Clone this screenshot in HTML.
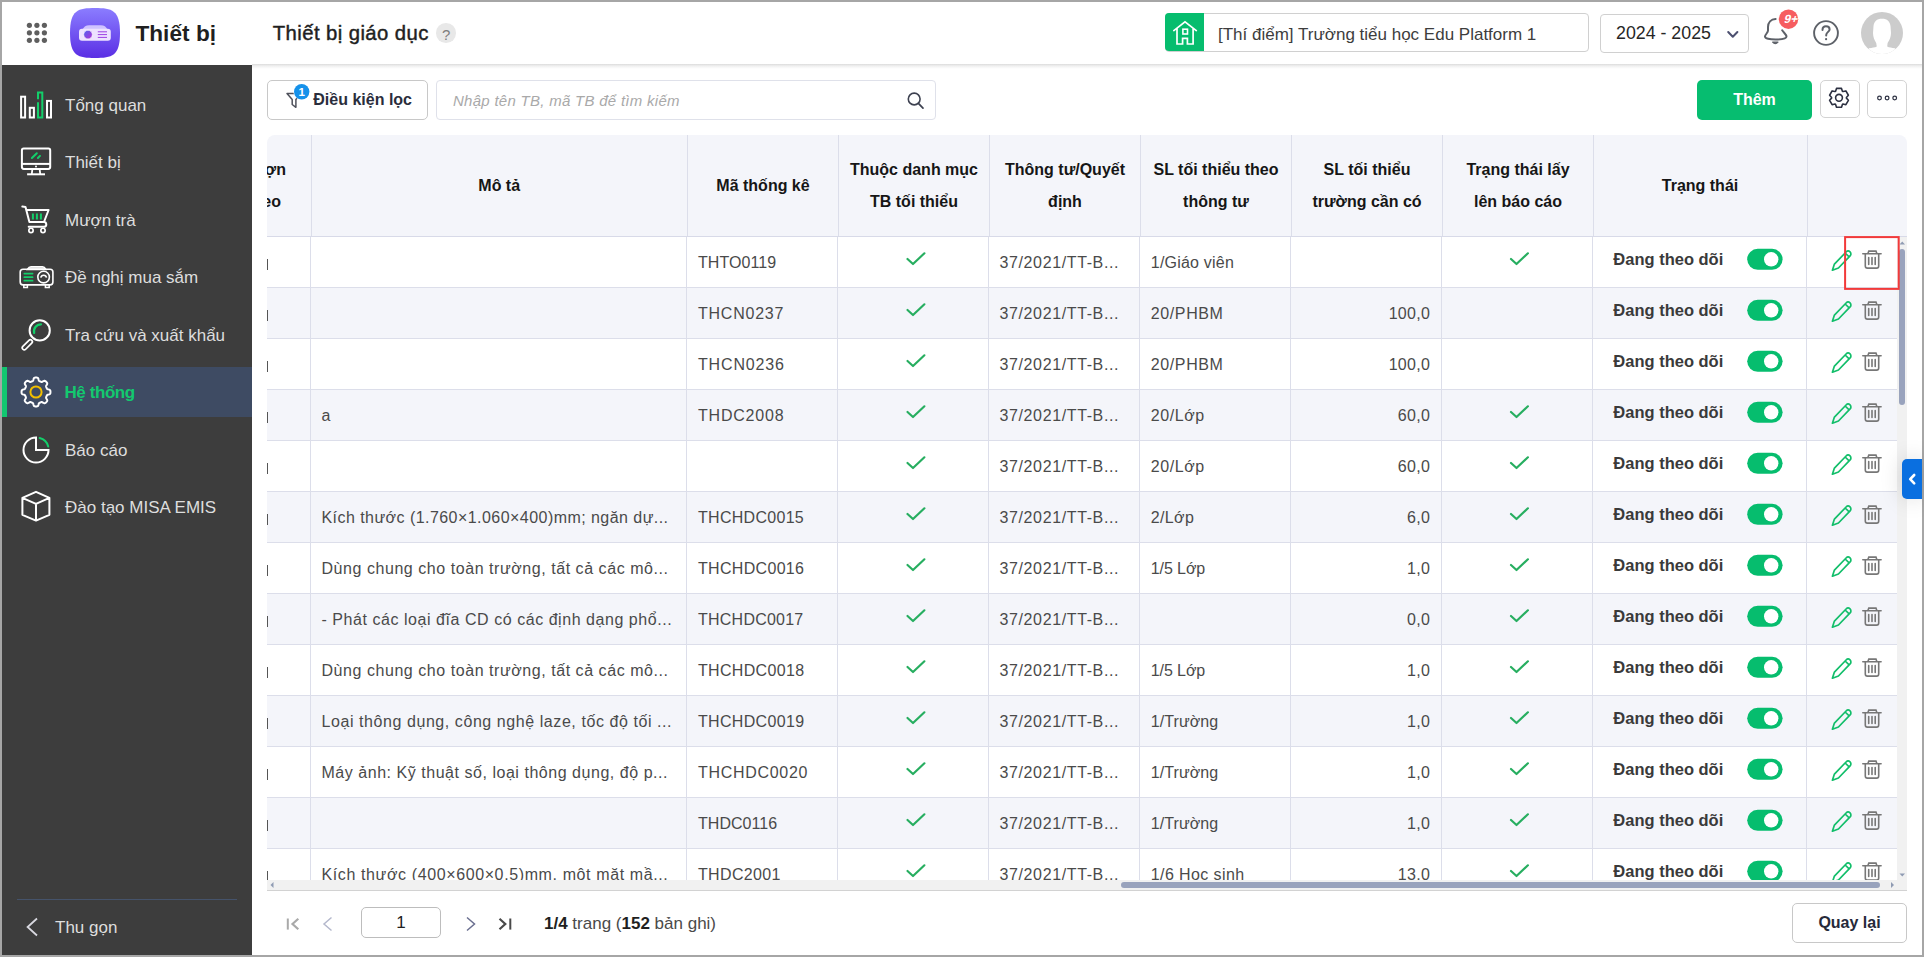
<!DOCTYPE html>
<html><head><meta charset="utf-8"><style>
html,body{margin:0;padding:0;}
body{width:1924px;height:957px;overflow:hidden;background:#a6a6a6;position:relative;font-family:"Liberation Sans", sans-serif;}
.t{position:absolute;white-space:nowrap;}
.r{position:absolute;box-sizing:content-box;}
svg.ov{position:absolute;left:0;top:0;width:1924px;height:957px;}
</style></head><body>
<div class="r" style="left:2px;top:2px;width:1920px;height:953px;background:#fff;"></div><div class="r" style="left:2px;top:65px;width:250px;height:890px;background:#3d3d3d;"></div><div class="r" style="left:2px;top:367px;width:250px;height:50px;background:#3e4b63;"></div><div class="r" style="left:2px;top:367px;width:5px;height:50px;background:#12c670;"></div><div class="t" style="left:65px;top:97.23px;font-size:17px;line-height:17px;color:#dedede;">Tổng quan</div><div class="t" style="left:65px;top:154.23px;font-size:17px;line-height:17px;color:#dedede;">Thiết bị</div><div class="t" style="left:65px;top:212.23px;font-size:17px;line-height:17px;color:#dedede;">Mượn trà</div><div class="t" style="left:65px;top:269.23px;font-size:17px;line-height:17px;color:#dedede;">Đề nghị mua sắm</div><div class="t" style="left:65px;top:327.23px;font-size:17px;line-height:17px;color:#dedede;">Tra cứu và xuất khẩu</div><div class="t" style="left:64.4px;top:384.23px;font-size:17px;line-height:17px;color:#13c96f;font-weight:bold;letter-spacing:-0.4px;">Hệ thống</div><div class="t" style="left:65px;top:442.23px;font-size:17px;line-height:17px;color:#dedede;">Báo cáo</div><div class="t" style="left:65px;top:499.23px;font-size:17px;line-height:17px;color:#dedede;">Đào tạo MISA EMIS</div><div class="r" style="left:17px;top:899px;width:220px;height:1px;background:#45536b;"></div><div class="t" style="left:55px;top:918.83px;font-size:17px;line-height:17px;color:#dedede;">Thu gọn</div><div class="t" style="left:135.4px;top:22.59px;font-size:22.6px;line-height:22.6px;color:#1f1f1f;font-weight:bold;letter-spacing:0.05px;">Thiết bị</div><div class="t" style="left:272.8px;top:23.16px;font-size:20.3px;line-height:20.3px;color:#1f1f1f;letter-spacing:0.42px;-webkit-text-stroke:0.45px #1f1f1f;">Thiết bị giáo dục</div><div class="r" style="left:436.3px;top:23.1px;width:19.6px;height:19.6px;background:#e8e8e8;border-radius:50%;"></div><div class="t" style="left:436.2px;width:20px;text-align:center;top:27.15px;font-size:15px;line-height:15px;color:#7d7d7d;">?</div><div class="r" style="left:252px;top:64px;width:1670px;height:5px;background:linear-gradient(rgba(0,0,0,0.14),rgba(0,0,0,0.06) 40%,rgba(0,0,0,0));"></div><div class="r" style="left:1165px;top:13px;width:422px;height:37.2px;border:1px solid #d0d0d0;border-radius:4px;background:#fff;"></div><div class="r" style="left:1165px;top:13px;width:39px;height:38.2px;background:#06bd6e;border-radius:4px 0 0 4px;"></div><div class="t" style="left:1218px;top:25.83px;font-size:17px;line-height:17px;color:#3d3d3d;">[Thí điểm] Trường tiểu học Edu Platform 1</div><div class="r" style="left:1599.5px;top:13.5px;width:147px;height:37px;border:1px solid #d0d0d0;border-radius:4px;background:#fff;"></div><div class="t" style="left:1616px;top:25.18px;font-size:17.8px;line-height:17.8px;color:#262626;">2024 - 2025</div><div class="r" style="left:267px;top:80px;width:159px;height:38px;border:1px solid #c8c8c8;border-radius:5px;background:#fff;"></div><div class="t" style="left:313.3px;top:91.64px;font-size:16px;line-height:16px;color:#2a2d3c;font-weight:bold;">Điều kiện lọc</div><div class="r" style="left:436px;top:80px;width:498px;height:38px;border:1px solid #dfe1ea;border-radius:4px;background:#fff;"></div><div class="t" style="left:453px;top:92.95px;font-size:15px;line-height:15px;color:#a9a9a9;letter-spacing:0.28px;font-style:italic;">Nhập tên TB, mã TB để tìm kiếm</div><div class="r" style="left:1697px;top:80px;width:115px;height:40px;background:#06bd70;border-radius:5px;"></div><div class="t" style="left:1697.0px;width:115px;text-align:center;top:91.54px;font-size:16px;line-height:16px;color:#fff;font-weight:bold;">Thêm</div><div class="r" style="left:1820.2px;top:80.2px;width:37.4px;height:35.4px;border:1px solid #d3d3d3;border-radius:5px;background:#fff;"></div><div class="r" style="left:1867.2px;top:80.2px;width:37.8px;height:35.4px;border:1px solid #d3d3d3;border-radius:5px;background:#fff;"></div><div class="r" style="left:267px;top:135px;width:1640px;height:101px;background:#f4f5fa;border-radius:8px 8px 0 0;"></div><div class="r" style="left:267px;top:236px;width:1640px;height:1px;background:#d8dae8;"></div><div class="r" style="left:311px;top:135px;width:1px;height:101px;background:#dcdeea;"></div><div class="r" style="left:687px;top:135px;width:1px;height:101px;background:#dcdeea;"></div><div class="r" style="left:838px;top:135px;width:1px;height:101px;background:#dcdeea;"></div><div class="r" style="left:989px;top:135px;width:1px;height:101px;background:#dcdeea;"></div><div class="r" style="left:1140px;top:135px;width:1px;height:101px;background:#dcdeea;"></div><div class="r" style="left:1291px;top:135px;width:1px;height:101px;background:#dcdeea;"></div><div class="r" style="left:1442px;top:135px;width:1px;height:101px;background:#dcdeea;"></div><div class="r" style="left:1593px;top:135px;width:1px;height:101px;background:#dcdeea;"></div><div class="r" style="left:1807px;top:135px;width:1px;height:101px;background:#dcdeea;"></div><div class="t" style="left:399.2px;width:200px;text-align:center;top:178.04px;font-size:16px;line-height:16px;color:#161616;font-weight:bold;">Mô tả</div><div class="t" style="left:663.0px;width:200px;text-align:center;top:178.04px;font-size:16px;line-height:16px;color:#161616;font-weight:bold;">Mã thống kê</div><div class="t" style="left:814.0px;width:200px;text-align:center;top:161.94px;font-size:16px;line-height:16px;color:#161616;font-weight:bold;">Thuộc danh mục</div><div class="t" style="left:814.0px;width:200px;text-align:center;top:193.74px;font-size:16px;line-height:16px;color:#161616;font-weight:bold;">TB tối thiểu</div><div class="t" style="left:965.0px;width:200px;text-align:center;top:161.94px;font-size:16px;line-height:16px;color:#161616;font-weight:bold;">Thông tư/Quyết</div><div class="t" style="left:965.0px;width:200px;text-align:center;top:193.74px;font-size:16px;line-height:16px;color:#161616;font-weight:bold;">định</div><div class="t" style="left:1116.0px;width:200px;text-align:center;top:161.94px;font-size:16px;line-height:16px;color:#161616;font-weight:bold;">SL tối thiểu theo</div><div class="t" style="left:1116.0px;width:200px;text-align:center;top:193.74px;font-size:16px;line-height:16px;color:#161616;font-weight:bold;">thông tư</div><div class="t" style="left:1267.0px;width:200px;text-align:center;top:161.94px;font-size:16px;line-height:16px;color:#161616;font-weight:bold;">SL tối thiểu</div><div class="t" style="left:1267.0px;width:200px;text-align:center;top:193.74px;font-size:16px;line-height:16px;color:#161616;font-weight:bold;">trường cần có</div><div class="t" style="left:1418.0px;width:200px;text-align:center;top:161.94px;font-size:16px;line-height:16px;color:#161616;font-weight:bold;">Trạng thái lấy</div><div class="t" style="left:1418.0px;width:200px;text-align:center;top:193.74px;font-size:16px;line-height:16px;color:#161616;font-weight:bold;">lên báo cáo</div><div class="t" style="left:1600.0px;width:200px;text-align:center;top:178.04px;font-size:16px;line-height:16px;color:#161616;font-weight:bold;">Trạng thái</div><div class="r" style="left:267px;top:135px;width:43px;height:100px;overflow:hidden;"><div class="t" style="right:24px;top:26.94px;font-size:16px;line-height:16px;color:#161616;font-weight:bold;">mượn</div><div class="t" style="right:29px;top:58.74px;font-size:16px;line-height:16px;color:#161616;font-weight:bold;">theo</div></div><div class="r" style="left:267px;top:237px;width:1630px;height:643px;overflow:hidden;"><div class="r" style="left:0px;top:50px;width:1640px;height:1px;background:#dcdeea;"></div><div class="r" style="left:0px;top:22px;width:1.1px;height:11px;background:#555;"></div><div class="t" style="left:431px;top:18.34px;font-size:16px;line-height:16px;color:#4a4a4a;letter-spacing:0.054px;">THTO0119</div><div class="t" style="left:732.5px;top:18.34px;font-size:16px;line-height:16px;color:#4a4a4a;letter-spacing:0.62px;">37/2021/TT-B...</div><div class="t" style="left:883.8px;top:18.34px;font-size:16px;line-height:16px;color:#4a4a4a;letter-spacing:0.206px;">1/Giáo viên</div><div class="t" style="left:1346.3px;top:13.94px;font-size:16.5px;line-height:16.5px;color:#3a3a3a;font-weight:bold;">Đang theo dõi</div><div class="r" style="left:0px;top:51px;width:1640px;height:50px;background:#f4f5fa;"></div><div class="r" style="left:0px;top:101px;width:1640px;height:1px;background:#dcdeea;"></div><div class="r" style="left:0px;top:73px;width:1.1px;height:11px;background:#555;"></div><div class="t" style="left:431px;top:69.34px;font-size:16px;line-height:16px;color:#4a4a4a;letter-spacing:0.759px;">THCN0237</div><div class="t" style="left:732.5px;top:69.34px;font-size:16px;line-height:16px;color:#4a4a4a;letter-spacing:0.62px;">37/2021/TT-B...</div><div class="t" style="left:883.8px;top:69.34px;font-size:16px;line-height:16px;color:#4a4a4a;letter-spacing:0.604px;">20/PHBM</div><div class="t" style="left:1023.2px;width:140px;text-align:right;top:69.34px;font-size:16px;line-height:16px;color:#4a4a4a;letter-spacing:0.3px;">100,0</div><div class="t" style="left:1346.3px;top:64.94px;font-size:16.5px;line-height:16.5px;color:#3a3a3a;font-weight:bold;">Đang theo dõi</div><div class="r" style="left:0px;top:152px;width:1640px;height:1px;background:#dcdeea;"></div><div class="r" style="left:0px;top:124px;width:1.1px;height:11px;background:#555;"></div><div class="t" style="left:431px;top:120.34px;font-size:16px;line-height:16px;color:#4a4a4a;letter-spacing:0.846px;">THCN0236</div><div class="t" style="left:732.5px;top:120.34px;font-size:16px;line-height:16px;color:#4a4a4a;letter-spacing:0.62px;">37/2021/TT-B...</div><div class="t" style="left:883.8px;top:120.34px;font-size:16px;line-height:16px;color:#4a4a4a;letter-spacing:0.604px;">20/PHBM</div><div class="t" style="left:1023.2px;width:140px;text-align:right;top:120.34px;font-size:16px;line-height:16px;color:#4a4a4a;letter-spacing:0.3px;">100,0</div><div class="t" style="left:1346.3px;top:115.94px;font-size:16.5px;line-height:16.5px;color:#3a3a3a;font-weight:bold;">Đang theo dõi</div><div class="r" style="left:0px;top:153px;width:1640px;height:50px;background:#f4f5fa;"></div><div class="r" style="left:0px;top:203px;width:1640px;height:1px;background:#dcdeea;"></div><div class="r" style="left:0px;top:175px;width:1.1px;height:11px;background:#555;"></div><div class="t" style="left:54.5px;top:171.34px;font-size:16px;line-height:16px;color:#4a4a4a;letter-spacing:0.3px;">a</div><div class="t" style="left:431px;top:171.34px;font-size:16px;line-height:16px;color:#4a4a4a;letter-spacing:0.796px;">THDC2008</div><div class="t" style="left:732.5px;top:171.34px;font-size:16px;line-height:16px;color:#4a4a4a;letter-spacing:0.62px;">37/2021/TT-B...</div><div class="t" style="left:883.8px;top:171.34px;font-size:16px;line-height:16px;color:#4a4a4a;letter-spacing:0.561px;">20/Lớp</div><div class="t" style="left:1023.2px;width:140px;text-align:right;top:171.34px;font-size:16px;line-height:16px;color:#4a4a4a;letter-spacing:0.3px;">60,0</div><div class="t" style="left:1346.3px;top:166.94px;font-size:16.5px;line-height:16.5px;color:#3a3a3a;font-weight:bold;">Đang theo dõi</div><div class="r" style="left:0px;top:254px;width:1640px;height:1px;background:#dcdeea;"></div><div class="r" style="left:0px;top:226px;width:1.1px;height:11px;background:#555;"></div><div class="t" style="left:732.5px;top:222.34px;font-size:16px;line-height:16px;color:#4a4a4a;letter-spacing:0.62px;">37/2021/TT-B...</div><div class="t" style="left:883.8px;top:222.34px;font-size:16px;line-height:16px;color:#4a4a4a;letter-spacing:0.561px;">20/Lớp</div><div class="t" style="left:1023.2px;width:140px;text-align:right;top:222.34px;font-size:16px;line-height:16px;color:#4a4a4a;letter-spacing:0.3px;">60,0</div><div class="t" style="left:1346.3px;top:217.94px;font-size:16.5px;line-height:16.5px;color:#3a3a3a;font-weight:bold;">Đang theo dõi</div><div class="r" style="left:0px;top:255px;width:1640px;height:50px;background:#f4f5fa;"></div><div class="r" style="left:0px;top:305px;width:1640px;height:1px;background:#dcdeea;"></div><div class="r" style="left:0px;top:277px;width:1.1px;height:11px;background:#555;"></div><div class="t" style="left:54.5px;top:273.34px;font-size:16px;line-height:16px;color:#4a4a4a;letter-spacing:0.45px;">Kích thước (1.760×1.060×400)mm; ngăn dự...</div><div class="t" style="left:431px;top:273.34px;font-size:16px;line-height:16px;color:#4a4a4a;letter-spacing:0.286px;">THCHDC0015</div><div class="t" style="left:732.5px;top:273.34px;font-size:16px;line-height:16px;color:#4a4a4a;letter-spacing:0.62px;">37/2021/TT-B...</div><div class="t" style="left:883.8px;top:273.34px;font-size:16px;line-height:16px;color:#4a4a4a;letter-spacing:0.352px;">2/Lớp</div><div class="t" style="left:1023.2px;width:140px;text-align:right;top:273.34px;font-size:16px;line-height:16px;color:#4a4a4a;letter-spacing:0.3px;">6,0</div><div class="t" style="left:1346.3px;top:268.93px;font-size:16.5px;line-height:16.5px;color:#3a3a3a;font-weight:bold;">Đang theo dõi</div><div class="r" style="left:0px;top:356px;width:1640px;height:1px;background:#dcdeea;"></div><div class="r" style="left:0px;top:328px;width:1.1px;height:11px;background:#555;"></div><div class="t" style="left:54.5px;top:324.34px;font-size:16px;line-height:16px;color:#4a4a4a;letter-spacing:0.552px;">Dùng chung cho toàn trường, tất cả các mô...</div><div class="t" style="left:431px;top:324.34px;font-size:16px;line-height:16px;color:#4a4a4a;letter-spacing:0.316px;">THCHDC0016</div><div class="t" style="left:732.5px;top:324.34px;font-size:16px;line-height:16px;color:#4a4a4a;letter-spacing:0.62px;">37/2021/TT-B...</div><div class="t" style="left:883.8px;top:324.34px;font-size:16px;line-height:16px;color:#4a4a4a;letter-spacing:-0.098px;">1/5 Lớp</div><div class="t" style="left:1023.2px;width:140px;text-align:right;top:324.34px;font-size:16px;line-height:16px;color:#4a4a4a;letter-spacing:0.3px;">1,0</div><div class="t" style="left:1346.3px;top:319.93px;font-size:16.5px;line-height:16.5px;color:#3a3a3a;font-weight:bold;">Đang theo dõi</div><div class="r" style="left:0px;top:357px;width:1640px;height:50px;background:#f4f5fa;"></div><div class="r" style="left:0px;top:407px;width:1640px;height:1px;background:#dcdeea;"></div><div class="r" style="left:0px;top:379px;width:1.1px;height:11px;background:#555;"></div><div class="t" style="left:54.5px;top:375.34px;font-size:16px;line-height:16px;color:#4a4a4a;letter-spacing:0.547px;">- Phát các loại đĩa CD có các định dạng phổ...</div><div class="t" style="left:431px;top:375.34px;font-size:16px;line-height:16px;color:#4a4a4a;letter-spacing:0.236px;">THCHDC0017</div><div class="t" style="left:732.5px;top:375.34px;font-size:16px;line-height:16px;color:#4a4a4a;letter-spacing:0.62px;">37/2021/TT-B...</div><div class="t" style="left:1023.2px;width:140px;text-align:right;top:375.34px;font-size:16px;line-height:16px;color:#4a4a4a;letter-spacing:0.3px;">0,0</div><div class="t" style="left:1346.3px;top:370.93px;font-size:16.5px;line-height:16.5px;color:#3a3a3a;font-weight:bold;">Đang theo dõi</div><div class="r" style="left:0px;top:458px;width:1640px;height:1px;background:#dcdeea;"></div><div class="r" style="left:0px;top:430px;width:1.1px;height:11px;background:#555;"></div><div class="t" style="left:54.5px;top:426.34px;font-size:16px;line-height:16px;color:#4a4a4a;letter-spacing:0.552px;">Dùng chung cho toàn trường, tất cả các mô...</div><div class="t" style="left:431px;top:426.34px;font-size:16px;line-height:16px;color:#4a4a4a;letter-spacing:0.326px;">THCHDC0018</div><div class="t" style="left:732.5px;top:426.34px;font-size:16px;line-height:16px;color:#4a4a4a;letter-spacing:0.62px;">37/2021/TT-B...</div><div class="t" style="left:883.8px;top:426.34px;font-size:16px;line-height:16px;color:#4a4a4a;letter-spacing:-0.098px;">1/5 Lớp</div><div class="t" style="left:1023.2px;width:140px;text-align:right;top:426.34px;font-size:16px;line-height:16px;color:#4a4a4a;letter-spacing:0.3px;">1,0</div><div class="t" style="left:1346.3px;top:421.93px;font-size:16.5px;line-height:16.5px;color:#3a3a3a;font-weight:bold;">Đang theo dõi</div><div class="r" style="left:0px;top:459px;width:1640px;height:50px;background:#f4f5fa;"></div><div class="r" style="left:0px;top:509px;width:1640px;height:1px;background:#dcdeea;"></div><div class="r" style="left:0px;top:481px;width:1.1px;height:11px;background:#555;"></div><div class="t" style="left:54.5px;top:477.34px;font-size:16px;line-height:16px;color:#4a4a4a;letter-spacing:0.57px;">Loại thông dụng, công nghệ laze, tốc độ tối ...</div><div class="t" style="left:431px;top:477.34px;font-size:16px;line-height:16px;color:#4a4a4a;letter-spacing:0.326px;">THCHDC0019</div><div class="t" style="left:732.5px;top:477.34px;font-size:16px;line-height:16px;color:#4a4a4a;letter-spacing:0.62px;">37/2021/TT-B...</div><div class="t" style="left:883.8px;top:477.34px;font-size:16px;line-height:16px;color:#4a4a4a;letter-spacing:0.08px;">1/Trường</div><div class="t" style="left:1023.2px;width:140px;text-align:right;top:477.34px;font-size:16px;line-height:16px;color:#4a4a4a;letter-spacing:0.3px;">1,0</div><div class="t" style="left:1346.3px;top:472.93px;font-size:16.5px;line-height:16.5px;color:#3a3a3a;font-weight:bold;">Đang theo dõi</div><div class="r" style="left:0px;top:560px;width:1640px;height:1px;background:#dcdeea;"></div><div class="r" style="left:0px;top:532px;width:1.1px;height:11px;background:#555;"></div><div class="t" style="left:54.5px;top:528.34px;font-size:16px;line-height:16px;color:#4a4a4a;letter-spacing:0.533px;">Máy ảnh: Kỹ thuật số, loại thông dụng, độ p...</div><div class="t" style="left:431px;top:528.34px;font-size:16px;line-height:16px;color:#4a4a4a;letter-spacing:0.696px;">THCHDC0020</div><div class="t" style="left:732.5px;top:528.34px;font-size:16px;line-height:16px;color:#4a4a4a;letter-spacing:0.62px;">37/2021/TT-B...</div><div class="t" style="left:883.8px;top:528.34px;font-size:16px;line-height:16px;color:#4a4a4a;letter-spacing:0.08px;">1/Trường</div><div class="t" style="left:1023.2px;width:140px;text-align:right;top:528.34px;font-size:16px;line-height:16px;color:#4a4a4a;letter-spacing:0.3px;">1,0</div><div class="t" style="left:1346.3px;top:523.93px;font-size:16.5px;line-height:16.5px;color:#3a3a3a;font-weight:bold;">Đang theo dõi</div><div class="r" style="left:0px;top:561px;width:1640px;height:50px;background:#f4f5fa;"></div><div class="r" style="left:0px;top:611px;width:1640px;height:1px;background:#dcdeea;"></div><div class="r" style="left:0px;top:583px;width:1.1px;height:11px;background:#555;"></div><div class="t" style="left:431px;top:579.34px;font-size:16px;line-height:16px;color:#4a4a4a;letter-spacing:0.045px;">THDC0116</div><div class="t" style="left:732.5px;top:579.34px;font-size:16px;line-height:16px;color:#4a4a4a;letter-spacing:0.62px;">37/2021/TT-B...</div><div class="t" style="left:883.8px;top:579.34px;font-size:16px;line-height:16px;color:#4a4a4a;letter-spacing:0.08px;">1/Trường</div><div class="t" style="left:1023.2px;width:140px;text-align:right;top:579.34px;font-size:16px;line-height:16px;color:#4a4a4a;letter-spacing:0.3px;">1,0</div><div class="t" style="left:1346.3px;top:574.93px;font-size:16.5px;line-height:16.5px;color:#3a3a3a;font-weight:bold;">Đang theo dõi</div><div class="r" style="left:0px;top:662px;width:1640px;height:1px;background:#dcdeea;"></div><div class="r" style="left:0px;top:634px;width:1.1px;height:11px;background:#555;"></div><div class="t" style="left:54.5px;top:630.34px;font-size:16px;line-height:16px;color:#4a4a4a;letter-spacing:0.613px;">Kích thước (400×600×0.5)mm, một mặt mầ...</div><div class="t" style="left:431px;top:630.34px;font-size:16px;line-height:16px;color:#4a4a4a;letter-spacing:0.346px;">THDC2001</div><div class="t" style="left:732.5px;top:630.34px;font-size:16px;line-height:16px;color:#4a4a4a;letter-spacing:0.62px;">37/2021/TT-B...</div><div class="t" style="left:883.8px;top:630.34px;font-size:16px;line-height:16px;color:#4a4a4a;letter-spacing:0.405px;">1/6 Học sinh</div><div class="t" style="left:1023.2px;width:140px;text-align:right;top:630.34px;font-size:16px;line-height:16px;color:#4a4a4a;letter-spacing:0.3px;">13,0</div><div class="t" style="left:1346.3px;top:625.93px;font-size:16.5px;line-height:16.5px;color:#3a3a3a;font-weight:bold;">Đang theo dõi</div><div class="r" style="left:43px;top:0px;width:1px;height:643px;background:#dcdeea;"></div><div class="r" style="left:419px;top:0px;width:1px;height:643px;background:#dcdeea;"></div><div class="r" style="left:570px;top:0px;width:1px;height:643px;background:#dcdeea;"></div><div class="r" style="left:721px;top:0px;width:1px;height:643px;background:#dcdeea;"></div><div class="r" style="left:872px;top:0px;width:1px;height:643px;background:#dcdeea;"></div><div class="r" style="left:1023px;top:0px;width:1px;height:643px;background:#dcdeea;"></div><div class="r" style="left:1174px;top:0px;width:1px;height:643px;background:#dcdeea;"></div><div class="r" style="left:1325px;top:0px;width:1px;height:643px;background:#dcdeea;"></div><div class="r" style="left:1539px;top:0px;width:1px;height:643px;background:#dcdeea;"></div></div><div class="r" style="left:267px;top:880px;width:1630px;height:10px;background:#f1f1f1;"></div><div class="r" style="left:267px;top:890px;width:1640px;height:1px;background:#d2d2d2;"></div><div class="r" style="left:1120.5px;top:882px;width:759.5px;height:6px;background:#99a3bd;border-radius:3px;"></div><div class="r" style="left:1897px;top:237px;width:10px;height:653px;background:#f1f1f1;"></div><div class="r" style="left:1899px;top:249px;width:6px;height:156px;background:#99a3bd;border-radius:3px;"></div><div class="r" style="left:361.2px;top:907.2px;width:77.8px;height:28.4px;border:1px solid #bdbdbd;border-radius:5px;background:#fff;"></div><div class="t" style="left:381.0px;width:40px;text-align:center;top:914.23px;font-size:17px;line-height:17px;color:#222;">1</div><div class="t" style="left:544px;top:915.23px;font-size:17px;line-height:17px;color:#4a4a4a;"><b style="color:#1f1f1f">1/4</b> trang (<b style="color:#1f1f1f">152</b> bản ghi)</div><div class="r" style="left:1792px;top:903px;width:113px;height:38px;border:1px solid #c8c8c8;border-radius:5px;background:#fff;"></div><div class="t" style="left:1793.0px;width:113px;text-align:center;top:914.64px;font-size:16px;line-height:16px;color:#262a3a;font-weight:bold;">Quay lại</div><div class="r" style="left:1902px;top:459px;width:20px;height:40px;background:#0a6fe0;border-radius:5px 0 0 5px;box-shadow:0 0 22px rgba(0,0,0,0.15);"></div>
<svg class="ov" width="1924" height="957" viewBox="0 0 1924 957">
<circle cx="29.4" cy="25.3" r="2.6" fill="#5f5f5f"/><circle cx="36.9" cy="25.3" r="2.6" fill="#5f5f5f"/><circle cx="44.4" cy="25.3" r="2.6" fill="#5f5f5f"/><circle cx="29.4" cy="32.8" r="2.6" fill="#5f5f5f"/><circle cx="36.9" cy="32.8" r="2.6" fill="#5f5f5f"/><circle cx="44.4" cy="32.8" r="2.6" fill="#5f5f5f"/><circle cx="29.4" cy="40.3" r="2.6" fill="#5f5f5f"/><circle cx="36.9" cy="40.3" r="2.6" fill="#5f5f5f"/><circle cx="44.4" cy="40.3" r="2.6" fill="#5f5f5f"/><defs><linearGradient id="lg" x1="0" y1="0" x2="0" y2="1"><stop offset="0" stop-color="#8b7dff"/><stop offset="1" stop-color="#5a2ee4"/></linearGradient><linearGradient id="lens" x1="0" y1="0" x2="1" y2="1"><stop offset="0" stop-color="#4e63f0"/><stop offset="1" stop-color="#b12fd6"/></linearGradient></defs><path d="M95 8 C112 8 120 10 120 33 C120 56 112 58 95 58 C78 58 70 56 70 33 C70 10 78 8 95 8 Z" fill="url(#lg)"/><path d="M82.5 29.5 Q84.5 25.2 89 25.2 L101 25.2 Q105.5 25.2 107.5 29.5 Z" fill="#cfc3ff"/><rect x="79" y="28.8" width="31.8" height="12" rx="3" fill="#ede2ff"/><circle cx="88" cy="34.6" r="4.3" fill="url(#lens)" stroke="#fff" stroke-width="0.6"/><line x1="97.8" y1="31.8" x2="107" y2="31.8" stroke="#9d3fe3" stroke-width="1"/><line x1="97.8" y1="34.6" x2="107" y2="34.6" stroke="#9d3fe3" stroke-width="1"/><line x1="97.8" y1="37.4" x2="107" y2="37.4" stroke="#9d3fe3" stroke-width="1"/><rect x="21.1" y="96.7" width="4" height="20.8" fill="none" stroke="#ffffff" stroke-width="2"/><rect x="29.8" y="107.8" width="4.1" height="9.7" fill="none" stroke="#ffffff" stroke-width="2"/><path d="M38 99.3 L38 92.5 L42.3 92.5 L42.3 117.5 L38 117.5 L38 102.3" fill="none" stroke="#13cf6a" stroke-width="2"/><rect x="47" y="100.9" width="4" height="16.6" fill="none" stroke="#ffffff" stroke-width="2"/><rect x="21.9" y="148.6" width="28.3" height="20.3" rx="1.8" fill="none" stroke="#ffffff" stroke-width="2"/><line x1="21.9" y1="163.9" x2="50.2" y2="163.9" stroke="#ffffff" stroke-width="2"/><circle cx="36" cy="166.6" r="1" fill="#ffffff"/><path d="M32.3 169.5 L31.8 174 M39.7 169.5 L40.2 174" stroke="#ffffff" stroke-width="1.8"/><line x1="27.1" y1="174.3" x2="45" y2="174.3" stroke="#ffffff" stroke-width="2"/><path d="M31.9 158 L36.8 153.2 M37.9 158 L40 155.9" stroke="#13cf6a" stroke-width="2" stroke-linecap="round"/><path d="M22.3 206.6 L25.5 207 L29.4 222 L43.6 222 Q46.3 222 46.3 224.4 Q46.3 226.8 43.6 226.8 L28.7 226.8" fill="none" stroke="#ffffff" stroke-width="2" stroke-linejoin="round" stroke-linecap="round"/><path d="M26.3 210 L48.6 210 L44 222" fill="none" stroke="#ffffff" stroke-width="2" stroke-linejoin="round"/><circle cx="31" cy="230.4" r="2.15" fill="none" stroke="#ffffff" stroke-width="1.7"/><circle cx="43" cy="230.4" r="2.15" fill="none" stroke="#ffffff" stroke-width="1.7"/><path d="M32.9 213.6 L32.9 219.5 M36.9 213.6 L36.9 219.5 M40.9 213.6 L40.9 219.5" stroke="#13cf6a" stroke-width="2"/><path d="M27.4 269.4 Q29 266.8 31 266.8 L42.5 266.8 Q44.5 266.8 45.8 269.4 Z" fill="#c4c4c4" stroke="#ffffff" stroke-width="1.6"/><rect x="20.2" y="269.3" width="32.7" height="15.6" rx="2.8" fill="none" stroke="#ffffff" stroke-width="1.6"/><circle cx="43.6" cy="277.1" r="5.8" fill="none" stroke="#ffffff" stroke-width="1.6"/><path d="M40.8 277.6 A2.9 2.9 0 0 1 46.5 277.6" fill="none" stroke="#ffffff" stroke-width="1.6"/><path d="M24.3 273.6 L32.6 273.6 M24.3 277.2 L32.6 277.2 M24.3 280.7 L32.6 280.7" stroke="#13cf6a" stroke-width="1.7" stroke-linecap="round"/><path d="M23.8 284.8 L23.8 287.6 L27.4 287.6 L27.4 284.8 M45.4 284.8 L45.4 287.6 L49.2 287.6 L49.2 284.8" fill="none" stroke="#ffffff" stroke-width="1.5"/><circle cx="39.7" cy="330.4" r="10.1" fill="none" stroke="#ffffff" stroke-width="2"/><g transform="translate(27.3,344.8) rotate(-45)"><rect x="-6.3" y="-2" width="12.6" height="4" rx="2" fill="none" stroke="#ffffff" stroke-width="1.7"/></g><path d="M34.2 333 A7 7 0 0 1 41 324.3" fill="none" stroke="#13cf6a" stroke-width="2.2" stroke-linecap="round"/><path d="M50.45 392.00 L50.44 391.62 L50.41 391.24 L50.36 390.87 L50.25 390.50 L50.05 390.15 L49.67 389.84 L49.04 389.58 L48.27 389.39 L47.63 389.21 L47.23 388.99 L47.00 388.74 L46.84 388.48 L46.72 388.21 L46.60 387.93 L46.49 387.66 L46.37 387.38 L46.26 387.11 L46.16 386.82 L46.08 386.53 L46.07 386.19 L46.20 385.75 L46.52 385.17 L46.93 384.49 L47.20 383.87 L47.24 383.37 L47.14 382.98 L46.95 382.65 L46.73 382.34 L46.48 382.06 L46.22 381.78 L45.94 381.52 L45.66 381.27 L45.35 381.05 L45.02 380.86 L44.63 380.76 L44.13 380.80 L43.51 381.07 L42.83 381.48 L42.25 381.80 L41.81 381.93 L41.47 381.92 L41.18 381.84 L40.89 381.74 L40.62 381.63 L40.34 381.51 L40.07 381.40 L39.79 381.28 L39.52 381.16 L39.26 381.00 L39.01 380.77 L38.79 380.37 L38.61 379.73 L38.42 378.96 L38.16 378.33 L37.85 377.95 L37.50 377.75 L37.13 377.64 L36.76 377.59 L36.38 377.56 L36.00 377.55 L35.62 377.56 L35.24 377.59 L34.87 377.64 L34.50 377.75 L34.15 377.95 L33.84 378.33 L33.58 378.96 L33.39 379.73 L33.21 380.37 L32.99 380.77 L32.74 381.00 L32.48 381.16 L32.21 381.28 L31.93 381.40 L31.66 381.51 L31.38 381.63 L31.11 381.74 L30.82 381.84 L30.53 381.92 L30.19 381.93 L29.75 381.80 L29.17 381.48 L28.49 381.07 L27.87 380.80 L27.37 380.76 L26.98 380.86 L26.65 381.05 L26.34 381.27 L26.06 381.52 L25.78 381.78 L25.52 382.06 L25.27 382.34 L25.05 382.65 L24.86 382.98 L24.76 383.37 L24.80 383.87 L25.07 384.49 L25.48 385.17 L25.80 385.75 L25.93 386.19 L25.92 386.53 L25.84 386.82 L25.74 387.11 L25.63 387.38 L25.51 387.66 L25.40 387.93 L25.28 388.21 L25.16 388.48 L25.00 388.74 L24.77 388.99 L24.37 389.21 L23.73 389.39 L22.96 389.58 L22.33 389.84 L21.95 390.15 L21.75 390.50 L21.64 390.87 L21.59 391.24 L21.56 391.62 L21.55 392.00 L21.56 392.38 L21.59 392.76 L21.64 393.13 L21.75 393.50 L21.95 393.85 L22.33 394.16 L22.96 394.42 L23.73 394.61 L24.37 394.79 L24.77 395.01 L25.00 395.26 L25.16 395.52 L25.28 395.79 L25.40 396.07 L25.51 396.34 L25.63 396.62 L25.74 396.89 L25.84 397.18 L25.92 397.47 L25.93 397.81 L25.80 398.25 L25.48 398.83 L25.07 399.51 L24.80 400.13 L24.76 400.63 L24.86 401.02 L25.05 401.35 L25.27 401.66 L25.52 401.94 L25.78 402.22 L26.06 402.48 L26.34 402.73 L26.65 402.95 L26.98 403.14 L27.37 403.24 L27.87 403.20 L28.49 402.93 L29.17 402.52 L29.75 402.20 L30.19 402.07 L30.53 402.08 L30.82 402.16 L31.11 402.26 L31.38 402.37 L31.66 402.49 L31.93 402.60 L32.21 402.72 L32.48 402.84 L32.74 403.00 L32.99 403.23 L33.21 403.63 L33.39 404.27 L33.58 405.04 L33.84 405.67 L34.15 406.05 L34.50 406.25 L34.87 406.36 L35.24 406.41 L35.62 406.44 L36.00 406.45 L36.38 406.44 L36.76 406.41 L37.13 406.36 L37.50 406.25 L37.85 406.05 L38.16 405.67 L38.42 405.04 L38.61 404.27 L38.79 403.63 L39.01 403.23 L39.26 403.00 L39.52 402.84 L39.79 402.72 L40.07 402.60 L40.34 402.49 L40.62 402.37 L40.89 402.26 L41.18 402.16 L41.47 402.08 L41.81 402.07 L42.25 402.20 L42.83 402.52 L43.51 402.93 L44.13 403.20 L44.63 403.24 L45.02 403.14 L45.35 402.95 L45.66 402.73 L45.94 402.48 L46.22 402.22 L46.48 401.94 L46.73 401.66 L46.95 401.35 L47.14 401.02 L47.24 400.63 L47.20 400.13 L46.93 399.51 L46.52 398.83 L46.20 398.25 L46.07 397.81 L46.08 397.47 L46.16 397.18 L46.26 396.89 L46.37 396.62 L46.49 396.34 L46.60 396.07 L46.72 395.79 L46.84 395.52 L47.00 395.26 L47.23 395.01 L47.63 394.79 L48.27 394.61 L49.04 394.42 L49.67 394.16 L50.05 393.85 L50.25 393.50 L50.36 393.13 L50.41 392.76 L50.44 392.38 Z" fill="none" stroke="#ffffff" stroke-width="2" stroke-linejoin="round"/><circle cx="36" cy="392" r="5.6" fill="none" stroke="#f2bf00" stroke-width="2"/><path d="M36 437.5 A12.5 12.5 0 1 0 48.5 450 L36 450 Z" fill="none" stroke="#ffffff" stroke-width="2" stroke-linejoin="miter"/><path d="M39.6 438 A11.5 11.5 0 0 1 48.2 446.5" fill="none" stroke="#13cf6a" stroke-width="2" stroke-linecap="round"/><path d="M36 491.8 L49.4 497.9 L49.4 514.8 L36 520.6 L22.4 514.8 L22.4 497.9 Z M22.4 497.9 L36 503.8 L49.4 497.9 M36 503.8 L36 520.6" fill="none" stroke="#ffffff" stroke-width="2" stroke-linejoin="round"/><path d="M37 918.5 L27.6 927 L37 935.5" fill="none" stroke="#d8d8e0" stroke-width="1.8"/><path d="M1173.8 30.6 L1185 21.9 L1196.3 30.6 M1177 28.6 L1177 44 L1182.6 44 L1182.6 38.3 L1187.4 38.3 L1187.4 44 L1193.1 44 L1193.1 28.6" fill="none" stroke="#fff" stroke-width="1.7" stroke-linecap="round" stroke-linejoin="miter"/><rect x="1182.9" y="29.2" width="4.6" height="4.8" fill="none" stroke="#fff" stroke-width="1.6"/><path d="M1728.2 32 L1732.8 36.8 L1737.4 32" fill="none" stroke="#4d5070" stroke-width="2" stroke-linecap="round" stroke-linejoin="round"/><path d="M1775.6 18.9 C1771 19.2 1768 22.5 1768 27 L1768 30.5 C1768 32.8 1765.3 34.3 1765 36.3 C1764.8 38.8 1770 39.5 1775.5 39.5 C1781 39.5 1786.5 38.9 1786.5 36.6 C1786.5 34.6 1783.5 32.5 1782.2 30.3" fill="none" stroke="#5d6168" stroke-width="2" stroke-linecap="round"/><path d="M1772.6 42.2 Q1775.3 45 1778 42.2 Z" fill="#5d6168" stroke="#5d6168" stroke-width="1.2" stroke-linejoin="round"/><circle cx="1788.5" cy="19.2" r="10.6" fill="#fff"/><circle cx="1788.5" cy="19.2" r="9.7" fill="#f65d60"/><g transform="translate(1783.6,22.6) skewX(-14)"><text x="0" y="0" style="font-family:Liberation Sans;font-weight:bold;font-size:12px" fill="#fff">9+</text></g><circle cx="1826" cy="33" r="11.9" fill="none" stroke="#5d6168" stroke-width="1.9"/><path d="M1822.5 29.9 C1822.5 27.6 1824.1 26.3 1826 26.3 C1828 26.3 1829.6 27.6 1829.6 29.5 C1829.6 31.6 1826.2 32.3 1826.2 35 L1826.2 35.6" fill="none" stroke="#5d6168" stroke-width="2" stroke-linecap="round"/><circle cx="1826.1" cy="39.2" r="1.1" fill="#5d6168"/><defs><clipPath id="avc"><circle cx="1882" cy="33" r="21"/></clipPath></defs><circle cx="1882" cy="33" r="21" fill="#cccccc"/><path clip-path="url(#avc)" d="M1882 18.8 C1876.5 18.8 1874.2 21.5 1873.5 26 L1873 33 C1873 37 1874.5 40 1876.2 43 L1876.8 46.5 C1875 47.6 1872 47.8 1869 48.2 L1866 60 L1898 60 L1895 48.2 C1892 47.8 1889 47.6 1887.2 46.5 L1887.6 43 C1889.5 40 1891 37 1891 33 L1890.5 26 C1889.8 21.5 1887.5 18.8 1882 18.8 Z" fill="#fff"/><path d="M287 93.5 L301 93.5 L295.9 99.6 L295.9 107.3 L292.2 104.5 L292.2 99.6 Z" fill="none" stroke="#50525c" stroke-width="1.5" stroke-linejoin="round"/><circle cx="301.7" cy="91.7" r="8.3" fill="#fff"/><circle cx="301.7" cy="91.7" r="7.7" fill="#1591ea"/><text x="301.7" y="95.6" text-anchor="middle" font-family="Liberation Sans" font-weight="bold" font-size="11.5" fill="#fff">1</text><circle cx="914.2" cy="99" r="5.9" fill="none" stroke="#3d4150" stroke-width="1.6"/><path d="M918.4 103.4 L923 108.2" stroke="#3d4150" stroke-width="1.7" stroke-linecap="round"/><path d="M1842.40 91.20 L1841.50 88.40 L1836.50 88.40 L1835.60 91.20 L1834.98 91.56 L1832.11 90.93 L1829.61 95.27 L1831.58 97.44 L1831.58 98.16 L1829.61 100.33 L1832.11 104.67 L1834.98 104.04 L1835.60 104.40 L1836.50 107.20 L1841.50 107.20 L1842.40 104.40 L1843.02 104.04 L1845.89 104.67 L1848.39 100.33 L1846.42 98.16 L1846.42 97.44 L1848.39 95.27 L1845.89 90.93 L1843.02 91.56 Z" fill="none" stroke="#2d3142" stroke-width="1.6" stroke-linejoin="round"/><circle cx="1839" cy="97.8" r="3.4" fill="none" stroke="#2d3142" stroke-width="1.6"/><circle cx="1879.5" cy="98" r="1.85" fill="none" stroke="#2d3142" stroke-width="1.25"/><circle cx="1887.1" cy="98" r="1.85" fill="none" stroke="#2d3142" stroke-width="1.25"/><circle cx="1894.7" cy="98" r="1.85" fill="none" stroke="#2d3142" stroke-width="1.25"/><defs><clipPath id="bodyclip"><rect x="267" y="237" width="1630" height="643"/></clipPath><g id="chk"><path d="M907.5 259 L913 264 L924.4 253.3" fill="none" stroke="#27ae60" stroke-width="2.2" stroke-linecap="round" stroke-linejoin="round"/></g><g id="tog"><rect x="1747.2" y="248.8" width="35.4" height="21" rx="10.5" fill="#06bd6e"/><circle cx="1771.2" cy="259.3" r="7.2" fill="#fff"/></g><g id="pen"><g transform="translate(1832.4,321.2) rotate(-46)"><path d="M0 0 L5.8 -2.8 L22.6 -2.8 A2.8 2.8 0 0 1 22.6 2.8 L5.8 2.8 Z M21.2 -2.8 L21.2 2.8" fill="none" stroke="#12be6a" stroke-width="1.7" stroke-linejoin="round"/></g></g><g id="trash" fill="none" stroke="#777" stroke-width="1.6"><path d="M1862.8 304.7 L1881.1 304.7" stroke-linecap="round"/><path d="M1867.8 304.7 L1868.8 302.1 L1876 302.1 L1876.9 304.7"/><path d="M1865.3 304.7 L1865.3 317 Q1865.3 319.1 1867.4 319.1 L1876.6 319.1 Q1878.7 319.1 1878.7 317 L1878.7 304.7"/><path d="M1868.7 308.6 L1868.7 315.5 M1872 308.6 L1872 315.5 M1875.2 308.6 L1875.2 315.5" stroke-linecap="round"/></g></defs><g clip-path="url(#bodyclip)"><use href="#chk" transform="translate(0,0)"/><use href="#chk" transform="translate(603.5,0)"/><use href="#tog" transform="translate(0,0)"/><use href="#pen" transform="translate(0,-51)"/><use href="#trash" transform="translate(0,-51)"/><use href="#chk" transform="translate(0,51)"/><use href="#tog" transform="translate(0,51)"/><use href="#pen" transform="translate(0,0)"/><use href="#trash" transform="translate(0,0)"/><use href="#chk" transform="translate(0,102)"/><use href="#tog" transform="translate(0,102)"/><use href="#pen" transform="translate(0,51)"/><use href="#trash" transform="translate(0,51)"/><use href="#chk" transform="translate(0,153)"/><use href="#chk" transform="translate(603.5,153)"/><use href="#tog" transform="translate(0,153)"/><use href="#pen" transform="translate(0,102)"/><use href="#trash" transform="translate(0,102)"/><use href="#chk" transform="translate(0,204)"/><use href="#chk" transform="translate(603.5,204)"/><use href="#tog" transform="translate(0,204)"/><use href="#pen" transform="translate(0,153)"/><use href="#trash" transform="translate(0,153)"/><use href="#chk" transform="translate(0,255)"/><use href="#chk" transform="translate(603.5,255)"/><use href="#tog" transform="translate(0,255)"/><use href="#pen" transform="translate(0,204)"/><use href="#trash" transform="translate(0,204)"/><use href="#chk" transform="translate(0,306)"/><use href="#chk" transform="translate(603.5,306)"/><use href="#tog" transform="translate(0,306)"/><use href="#pen" transform="translate(0,255)"/><use href="#trash" transform="translate(0,255)"/><use href="#chk" transform="translate(0,357)"/><use href="#chk" transform="translate(603.5,357)"/><use href="#tog" transform="translate(0,357)"/><use href="#pen" transform="translate(0,306)"/><use href="#trash" transform="translate(0,306)"/><use href="#chk" transform="translate(0,408)"/><use href="#chk" transform="translate(603.5,408)"/><use href="#tog" transform="translate(0,408)"/><use href="#pen" transform="translate(0,357)"/><use href="#trash" transform="translate(0,357)"/><use href="#chk" transform="translate(0,459)"/><use href="#chk" transform="translate(603.5,459)"/><use href="#tog" transform="translate(0,459)"/><use href="#pen" transform="translate(0,408)"/><use href="#trash" transform="translate(0,408)"/><use href="#chk" transform="translate(0,510)"/><use href="#chk" transform="translate(603.5,510)"/><use href="#tog" transform="translate(0,510)"/><use href="#pen" transform="translate(0,459)"/><use href="#trash" transform="translate(0,459)"/><use href="#chk" transform="translate(0,561)"/><use href="#chk" transform="translate(603.5,561)"/><use href="#tog" transform="translate(0,561)"/><use href="#pen" transform="translate(0,510)"/><use href="#trash" transform="translate(0,510)"/><use href="#chk" transform="translate(0,612)"/><use href="#chk" transform="translate(603.5,612)"/><use href="#tog" transform="translate(0,612)"/><use href="#pen" transform="translate(0,561)"/><use href="#trash" transform="translate(0,561)"/></g><rect x="1845.1" y="237.1" width="53.6" height="51.8" fill="none" stroke="#f23a3a" stroke-width="2"/><path d="M1899.5 244.5 L1902.3 241.5 L1905 244.5 Z" fill="#8f9bb3"/><path d="M1899.5 873.5 L1902.3 876.5 L1905 873.5 Z" fill="#8f9bb3"/><path d="M273.5 882 L270.5 885 L273.5 888 Z" fill="#8f9bb3"/><path d="M1891 882 L1894 885 L1891 888 Z" fill="#8f9bb3"/><path d="M287.8 918.5 L287.8 929.6" stroke="#a9a9a9" stroke-width="2"/><path d="M298.3 918.8 L292.5 924 L298.3 929.3" fill="none" stroke="#a9a9a9" stroke-width="2.2"/><path d="M331.5 917.5 L324 924 L331.5 930.5" fill="none" stroke="#b4b8cc" stroke-width="1.5"/><path d="M467 917.5 L474.5 924 L467 930.5" fill="none" stroke="#6b7090" stroke-width="1.5"/><path d="M499.5 918.8 L505.3 924 L499.5 929.3" fill="none" stroke="#4a4a4a" stroke-width="2.2"/><path d="M510.3 918.5 L510.3 929.6" stroke="#4a4a4a" stroke-width="2"/><path d="M1914.2 475 L1910.2 479.2 L1914.2 483.4" fill="none" stroke="#fff" stroke-width="2.6" stroke-linecap="round" stroke-linejoin="round"/>
</svg>
</body></html>
